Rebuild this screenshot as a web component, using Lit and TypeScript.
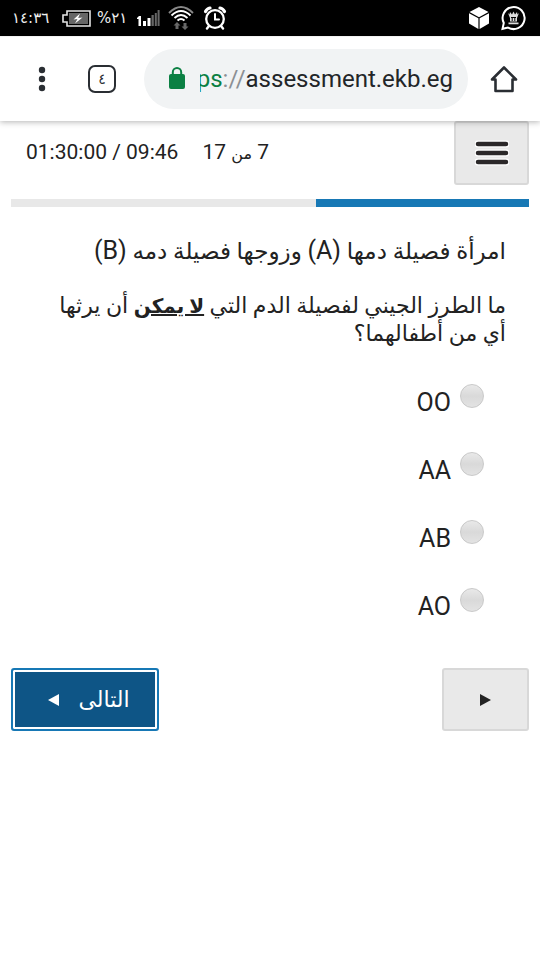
import { LitElement, html, css } from "lit";
import { customElement, state } from "lit/decorators.js";

@customElement("status-bar")
class StatusBar extends LitElement {
  static styles = css`
    :host { display: flex; align-items: center; justify-content: space-between; height: 36px;
      padding: 0 14px 0 12px; background: #000; color: #eee; font-family: "DejaVu Sans", sans-serif; }
    .group { display: flex; align-items: center; }
    .clock { font-size: 15px; width: 50px; white-space: nowrap; }
    .percent { font-size: 15px; margin: 0 8px 0 6px; width: 32px; white-space: nowrap; }
    .icons { gap: 10px; }
    svg { display: block; flex: none; }
    .wifi { margin-left: 8px; }
    .alarm { margin-left: 9px; }
  `;
  render() {
    return html`
      <div class="group">
        <span class="clock">١٤:٣٦</span>
        <svg width="29" height="17" viewBox="0 0 29 17" aria-hidden="true">
          <path d="M5 1H28V16H5V12H1V5H5Z" fill="#000" stroke="#e4e4e4" stroke-width="1.6"/>
          <path d="M7 3H26V14H7Z" fill="#666"/>
          <path d="M18 3.500L11.500 9.500L15.500 9L13 13.500L20.500 7.600L16.200 8Z" fill="#fff"/>
        </svg>
        <span class="percent" dir="ltr">%٢١</span>
        <svg width="23" height="17" viewBox="0 0 23 17" aria-hidden="true">
          <path d="M0 8L2 6H4V16H1.500V9H0ZM6 11H9V16H6ZM10.500 8H13.500V16H10.500Z" fill="#fff"/>
          <path d="M14.500 5H16.800V16H14.500ZM17.800 3H19.800V16H17.800ZM20.600 0H22.600V16H20.600Z" fill="#666"/>
        </svg>
        <svg class="wifi" width="26" height="26" viewBox="0 0 26 26" aria-hidden="true">
          <g fill="none" stroke="#fff" stroke-width="1.900">
            <path d="M1 8Q13 -4 25 8" stroke="#888"/><path d="M3.500 10.500Q13 1.500 22.500 10.500"/>
            <path d="M6.500 13Q13 7 19.500 13"/><path d="M9.500 15.500Q13 12.500 16.500 15.500"/>
          </g>
          <path d="M9 17L12.500 20.500H10.500V24H7.500V20.500H5.500ZM17 25L20.500 21.500H18.500V18H15.500V21.500H13.500Z" fill="#686868"/>
        </svg>
        <svg class="alarm" width="24" height="24" viewBox="0 0 24 24" aria-hidden="true">
          <g fill="none" stroke="#fff" stroke-linecap="round">
            <circle cx="12" cy="13" r="8.800" stroke-width="2.300"/>
            <path d="M12 8V13.500H16" stroke-width="2"/>
            <path d="M2.500 5.500Q4 2.500 7 2M21.500 5.500Q20 2.500 17 2" stroke-width="3.200"/>
            <path d="M6 20L4 22.500M18 20L20 22.500" stroke-width="2.400"/>
          </g>
        </svg>
      </div>
      <div class="group icons">
        <svg width="22" height="24" viewBox="0 0 22 24" aria-hidden="true">
          <path d="M11 1L20.500 6L11 11.200L1.500 6Z" fill="#fff"/>
          <path d="M1 7.200L10.400 12.300V23L1 17.500ZM21 7.200L11.600 12.300V23L21 17.500Z" fill="#fff"/>
        </svg>
        <svg width="26" height="26" viewBox="0 0 26 26" aria-hidden="true">
          <path d="M3.800 18A11 11 0 1 1 8 22.500L2.500 23.800Z" fill="none" stroke="#fff" stroke-width="2"/>
          <path d="M8 8L9.500 9.500L10 7L12 9.500L13.500 6.500L15 9.500L17 7L17.500 9.500L19 8L17 13V16.500H10V13ZM8.500 17.500H18.500V19.200H8.500Z" fill="#ddd"/>
          <path d="M11 12.500H16M12.200 13V16M14.800 13V16" stroke="#000" fill="none"/>
        </svg>
      </div>`;
  }
}

@customElement("browser-bar")
class BrowserBar extends LitElement {
  static styles = css`
    :host { position: relative; display: flex; align-items: center; height: 85px; padding: 0 20px 0 26px;
      background: #fff; border-top: 1px solid #f2f2f2; box-sizing: border-box; box-shadow: 0 1px 6px rgba(0,0,0,.3);
      font-family: Roboto, "DejaVu Sans", sans-serif; }
    button { display: grid; place-items: center; flex: none; width: 32px; height: 44px; padding: 0; border: 0;
      background: none; color: #2a2e33; font-family: inherit; }
    svg { display: block; flex: none; }
    .tabs { margin-left: 28px; }
    .count { display: grid; place-items: center; width: 28px; height: 28px; box-sizing: border-box;
      border: 2px solid #2a2e33; border-radius: 7px; font-size: 14px; line-height: 16px; }
    .address { display: flex; align-items: center; flex: 1; min-width: 0; height: 60px; box-sizing: border-box;
      margin: 0 20px 0 26px; padding: 0 15px 0 24px; border-radius: 30px; background: #f1f3f4; }
    .url { display: flex; justify-content: flex-end; flex: 1; min-width: 0; margin-left: 14px; overflow: hidden;
      color: #222528; font-size: 24px; line-height: 36px; text-decoration: none; white-space: nowrap; }
    .scheme { color: #0b8043; }
    .slashes { color: #8b8f93; }
  `;
  render() {
    return html`
      <button aria-label="المزيد">
        <svg width="8" height="26" viewBox="0 0 8 26" fill="currentColor"><circle cx="4" cy="4" r="3.200"/><circle cx="4" cy="13" r="3.200"/><circle cx="4" cy="22" r="3.200"/></svg>
      </button>
      <button class="tabs" aria-label="علامات التبويب"><span class="count">٤</span></button>
      <div class="address">
        <svg width="18" height="24" viewBox="0 0 18 24" aria-hidden="true">
          <path d="M4.800 9V5.200A4.200 4.200 0 0 1 13.200 5.200V9" fill="none" stroke="#0b8043" stroke-width="2"/>
          <rect x="1" y="7" width="16" height="15" rx="2" fill="#0b8043"/>
        </svg>
        <a class="url" href="https://assessment.ekb.eg"><span class="scheme">https</span><span class="slashes">://</span><span>assessment.ekb.eg</span></a>
      </div>
      <button aria-label="الصفحة الرئيسية">
        <svg width="28" height="28" viewBox="0 0 28 28" fill="none" stroke="currentColor" stroke-width="2.600" stroke-linejoin="round">
          <path d="M14 2.500L26 14.500H22.500V26H5.500V14.500H2Z"/>
        </svg>
      </button>`;
  }
}

@customElement("quiz-page")
class QuizPage extends LitElement {
  @state() private current = 7;
  @state() private total = 17;
  @state() private options = ["OO", "AA", "AB", "AO"];

  static styles = css`
    :host { display: block; padding: 0 11px; color: #222; font-family: Roboto, "DejaVu Sans", sans-serif; }
    button { font-family: inherit; box-sizing: border-box; border: 2px solid #d8d8d8; border-radius: 3px;
      background: #e9e9e9; color: #222; padding: 0; }
    .top { display: flex; align-items: center; justify-content: space-between; }
    .menu { display: grid; place-items: center; width: 75px; height: 64px; }
    .info { display: flex; gap: 24px; padding-left: 15px; font-size: 21px; line-height: 28px; }
    .arabic { font-size: 16px; }
    .track { height: 8px; margin-top: 14px; background: #e8e8e8; }
    .fill { height: 100%; background: #1778b5; }
    .question { padding: 30px 23px 0; font-size: 22px; line-height: 28px; }
    .question p { margin: 0 0 26px; }
    .question .intro { font-size: 23px; }
    .latin { font-size: 25px; }
    b { font-size: 20px; }
    fieldset { margin: 0; padding: 10px 45px 0; border: 0; }
    .option { display: flex; align-items: flex-start; gap: 9px; height: 68px; font-size: 25px; line-height: 28px; }
    .option span { padding-top: 5px; }
    input { appearance: none; flex: none; width: 24px; height: 24px; margin: 0; border: 1px solid #c9c9c9;
      border-radius: 50%; background: linear-gradient(#e9e9e9, #d9d9d9 50%, #e3e3e3); }
    input:checked { background: #1778b5; }
    .nav { display: flex; justify-content: space-between; margin-top: 12px; }
    .nav button { display: flex; align-items: center; justify-content: center; height: 63px; }
    .nav .prev { width: 87px; }
    .nav .next { width: 148px; gap: 18px; padding-left: 8px; border-color: #1778b5; background: #0e5586;
      box-shadow: inset 0 0 0 2px #fff; color: #fff; font-size: 22px; }
  `;
  render() {
    return html`
      <div class="top">
        <button class="menu" aria-label="القائمة">
          <svg width="34" height="26" viewBox="0 0 34 26" aria-hidden="true">
            <path d="M3 4H31M3 13H31M3 22H31" stroke="#fff" stroke-width="7" stroke-linecap="round"/>
            <path d="M3 4H31M3 13H31M3 22H31" stroke="#2b2829" stroke-width="4.500" stroke-linecap="round"/>
          </svg>
        </button>
        <div class="info">
          <span>${this.current} <span class="arabic">من</span> ${this.total}</span>
          <span dir="ltr">01:30:00 / 09:46</span>
        </div>
      </div>
      <div class="track"><div class="fill" style="width:${(this.current / this.total) * 100}%"></div></div>
      <div class="question">
        <p class="intro">امرأة فصيلة دمها <span class="latin">(A)</span> وزوجها فصيلة دمه <span class="latin">(B)</span></p>
        <p>ما الطرز الجيني لفصيلة الدم التي <b><u>لا يمكن</u></b> أن يرثها أي من أطفالهما؟</p>
      </div>
      <fieldset aria-label="الإجابات">
        ${this.options.map((o) => html`<label class="option"><input type="radio" name="answer" value=${o}><span>${o}</span></label>`)}
      </fieldset>
      <div class="nav">
        <button class="prev" aria-label="السابق">
          <svg width="12" height="12" viewBox="0 0 12 12"><path d="M0 0L11 6L0 12Z" fill="#222"/></svg>
        </button>
        <button class="next"><span>التالى</span>
          <svg width="12" height="12" viewBox="0 0 12 12" aria-hidden="true"><path d="M11 0L0 6L11 12Z" fill="#fff"/></svg>
        </button>
      </div>`;
  }
}

@customElement("app-root")
class AppRoot extends LitElement {
  static styles = css`
    :host { display: block; min-height: 100vh; background: #fff; }
  `;
  render() {
    return html`<status-bar></status-bar><browser-bar></browser-bar><quiz-page dir="rtl" lang="ar"></quiz-page>`;
  }
}
